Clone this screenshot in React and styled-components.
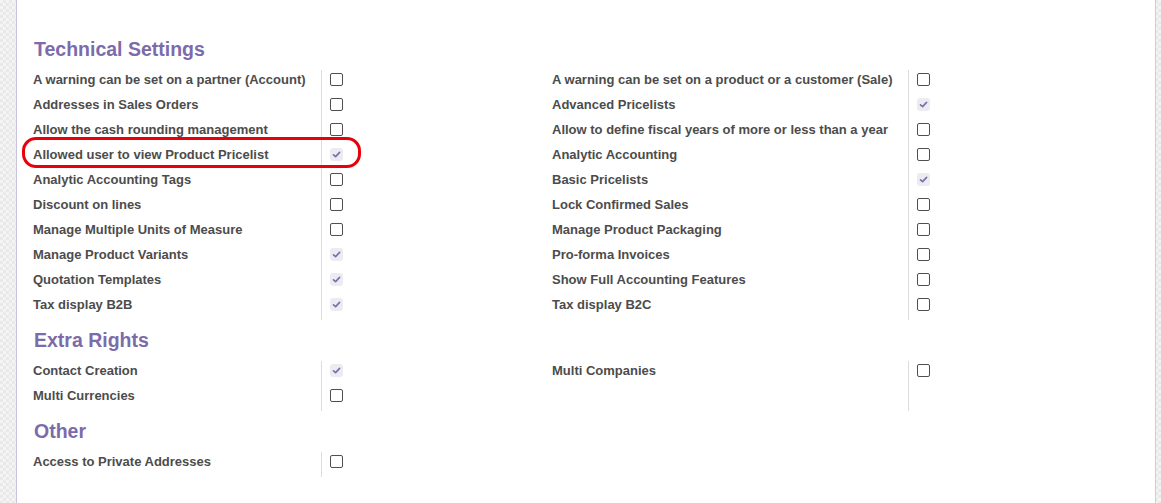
import React from "react";
import styled, { createGlobalStyle } from "styled-components";

const GlobalStyle = createGlobalStyle`
  html, body {
    margin: 0;
    padding: 0;
    height: 100%;
  }
  body {
    font-family: "Liberation Sans", Arial, sans-serif;
    background-color: #f4f4f4;
    background-image:
      linear-gradient(45deg, #e9e9e9 25%, transparent 25%, transparent 75%, #e9e9e9 75%),
      linear-gradient(45deg, #e9e9e9 25%, transparent 25%, transparent 75%, #e9e9e9 75%);
    background-size: 6px 6px;
    background-position: 0 0, 3px 3px;
    overflow: hidden;
  }
`;

const sections = [
  {
    title: "Technical Settings",
    rows: [
      [["A warning can be set on a partner (Account)", false], ["A warning can be set on a product or a customer (Sale)", false]],
      [["Addresses in Sales Orders", false], ["Advanced Pricelists", true]],
      [["Allow the cash rounding management", false], ["Allow to define fiscal years of more or less than a year", false]],
      [["Allowed user to view Product Pricelist", true, true], ["Analytic Accounting", false]],
      [["Analytic Accounting Tags", false], ["Basic Pricelists", true]],
      [["Discount on lines", false], ["Lock Confirmed Sales", false]],
      [["Manage Multiple Units of Measure", false], ["Manage Product Packaging", false]],
      [["Manage Product Variants", true], ["Pro-forma Invoices", false]],
      [["Quotation Templates", true], ["Show Full Accounting Features", false]],
      [["Tax display B2B", true], ["Tax display B2C", false]],
    ],
  },
  {
    title: "Extra Rights",
    rows: [
      [["Contact Creation", true], ["Multi Companies", false]],
      [["Multi Currencies", false], null],
    ],
  },
  {
    title: "Other",
    rows: [[["Access to Private Addresses", false]]],
  },
];

const Checkbox = ({ checked }) =>
  checked ? (
    <CheckedBox>
      <svg width="9" height="9" viewBox="0 0 9 9">
        <path d="M1.5 4.8 L3.6 6.6 L7.6 2.4" fill="none" stroke="#7c6bab" strokeWidth="1.6" strokeLinecap="round" strokeLinejoin="round" />
      </svg>
    </CheckedBox>
  ) : (
    <EmptyBox />
  );

export default function App() {
  return (
    <>
      <GlobalStyle />
      <Sheet>
        {sections.map((section) => (
          <Section key={section.title}>
            <Heading>{section.title}</Heading>
            <Grid>
              {section.rows.map((row, i) =>
                [0, 1].map((side) => {
                  const item = row[side];
                  if (side === 1 && row.length === 1) return null;
                  return (
                    <React.Fragment key={`${i}-${side}`}>
                      <Label>
                        {item ? item[0] : ""}
                        {item && item[2] && <Marker />}
                      </Label>
                      <Cell>{item && <Checkbox checked={item[1]} />}</Cell>
                    </React.Fragment>
                  );
                })
              )}
            </Grid>
          </Section>
        ))}
      </Sheet>
    </>
  );
}

const Sheet = styled.div`
  margin: 0 5px 0 16px;
  min-height: 100vh;
  box-sizing: border-box;
  background: #fff;
  border-left: 1px solid #c9c4dd;
  border-right: 1px solid #cfcfcf;
  padding: 29px 16px 0 16px;
`;

const Section = styled.div`
  display: flex;
  flex-direction: column;
`;

const Heading = styled.h2`
  margin: 8px 0 9px 1px;
  font-size: 19.5px;
  line-height: 24px;
  font-weight: bold;
  color: #7c6bab;
`;

const Grid = styled.div`
  display: grid;
  grid-template-columns: 288px 231px 356px 230px;
  grid-auto-rows: 25px;
`;

const Label = styled.div`
  position: relative;
  font-size: 13px;
  font-weight: bold;
  color: #4c4c4c;
  line-height: 18px;
  padding-top: 1px;
  white-space: nowrap;
`;

const Marker = styled.span`
  position: absolute;
  left: -11px;
  top: -8px;
  width: 333px;
  height: 25px;
  border: 3.5px solid #e8000b;
  border-radius: 14px;
  pointer-events: none;
`;

const Cell = styled.div`
  border-left: 1px solid #dcdcdc;
  padding: 3px 0 0 8px;
  box-sizing: border-box;
`;

const EmptyBox = styled.span`
  display: block;
  width: 13px;
  height: 13px;
  box-sizing: border-box;
  border: 1.5px solid #4f4f4f;
  border-radius: 2px;
  background: #fff;
`;

const CheckedBox = styled.span`
  display: flex;
  align-items: center;
  justify-content: center;
  width: 13px;
  height: 13px;
  border-radius: 3px;
  background: #ecebf2;
`;
